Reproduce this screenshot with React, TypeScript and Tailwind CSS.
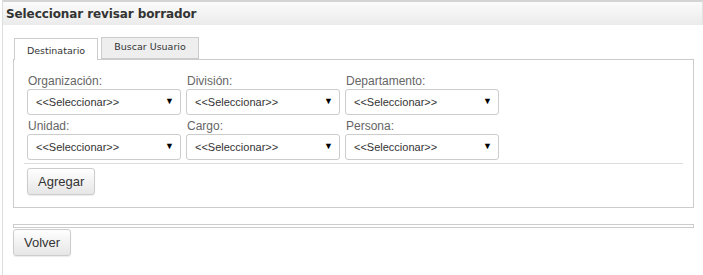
import React from 'react';

const fields = [
  ['Organización:', 'División:', 'Departamento:'],
  ['Unidad:', 'Cargo:', 'Persona:'],
];

const Select = () => (
  <div className="w-[154px] h-[26px] border border-[#ccc] rounded-[3px] bg-white flex items-center justify-between pl-[8px] pr-[6px] text-[11px] text-[#333]">
    <span>{'<<Seleccionar>>'}</span>
    <span className="text-[9px] text-black">▼</span>
  </div>
);

const Button = ({ label }: { label: string }) => (
  <button className="h-[27px] px-[10px] border border-[#ccc] rounded-[3px] bg-gradient-to-b from-white to-[#e6e6e6] text-[13px] text-[#333] shadow-[0_1px_1px_rgba(0,0,0,0.08)]">
    {label}
  </button>
);

export default function App() {
  return (
    <div className="w-[703px] h-[275px] bg-white font-['Liberation_Sans',Arial,sans-serif] pl-[2px]">
      <div className="h-full border-l border-[#ddd]">
        <div className="h-[25px] border-t-2 border-[#d4d4d4] border-r border-r-[#e4e4e4] bg-gradient-to-b from-[#fbfbfb] to-[#ebebeb] flex items-center pl-[3px]">
          <h1 className="font-['DejaVu_Sans',Verdana,sans-serif] font-bold text-[12px] text-[#333] tracking-[-0.1px]">
            Seleccionar revisar borrador
          </h1>
        </div>

        <div className="pl-[10px] pr-[9px] pt-[12px]">
          <div className="flex items-end gap-[3px] pl-[1px] font-['DejaVu_Sans',Verdana,sans-serif] text-[9.5px] text-[#333]">
            <div className="h-[22px] w-[84px] border border-b-0 border-[#ccc] bg-white flex items-center justify-center pt-[3px] relative top-[1px] z-10">
              Destinatario
            </div>
            <div className="h-[22px] w-[98px] border border-[#ccc] bg-[#eee] flex items-center justify-center pb-[1px]">
              Buscar Usuario
            </div>
          </div>

          <div className="border border-[#ccc] h-[149px] px-[10px] pt-[14px]">
            {fields.map((row, i) => (
              <div key={i} className="flex gap-[5px] pl-[3px] mb-[4px]">
                {row.map((label) => (
                  <div key={label} className="flex flex-col">
                    <label className="text-[12px] text-[#666] leading-[15px] pl-[1px]">{label}</label>
                    <Select />
                  </div>
                ))}
              </div>
            ))}
            <div className="border-t border-[#ddd] -mt-[1px] pt-[4px] pl-[3px]">
              <Button label="Agregar" />
            </div>
          </div>

          <div className="h-[4px] border border-[#ccc] mt-[16px] mb-[1px]" />
          <Button label="Volver" />
        </div>
      </div>
    </div>
  );
}
